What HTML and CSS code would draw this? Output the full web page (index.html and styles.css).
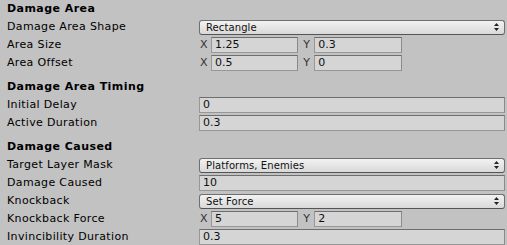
FILE: index.html
```html
<!DOCTYPE html>
<html lang="en">
<head>
    <meta charset="UTF-8">
    <title>Inspector - Damage Area</title>
    <link rel="stylesheet" href="styles.css">
</head>
<body>
    <div class="inspector">
        <div class="header first">Damage Area</div>
        <div class="row">
            <div class="label">Damage Area Shape</div>
            <div class="popup"><span>Rectangle</span><svg class="arrows" width="5" height="8" viewBox="0 0 5 8"><path d="M2.5 0 L5 3 L0 3 Z M0 5 L5 5 L2.5 8 Z" fill="#222"/></svg></div>
        </div>
        <div class="row">
            <div class="label">Area Size</div>
            <div class="vector">
                <div class="axis"><span class="axis-label">X</span><div class="field">1.25</div></div>
                <div class="axis"><span class="axis-label">Y</span><div class="field">0.3</div></div>
            </div>
        </div>
        <div class="row">
            <div class="label">Area Offset</div>
            <div class="vector">
                <div class="axis"><span class="axis-label">X</span><div class="field">0.5</div></div>
                <div class="axis"><span class="axis-label">Y</span><div class="field">0</div></div>
            </div>
        </div>

        <div class="header">Damage Area Timing</div>
        <div class="row">
            <div class="label">Initial Delay</div>
            <div class="field">0</div>
        </div>
        <div class="row">
            <div class="label">Active Duration</div>
            <div class="field">0.3</div>
        </div>

        <div class="header">Damage Caused</div>
        <div class="row">
            <div class="label">Target Layer Mask</div>
            <div class="popup"><span>Platforms, Enemies</span><svg class="arrows" width="5" height="8" viewBox="0 0 5 8"><path d="M2.5 0 L5 3 L0 3 Z M0 5 L5 5 L2.5 8 Z" fill="#222"/></svg></div>
        </div>
        <div class="row">
            <div class="label">Damage Caused</div>
            <div class="field">10</div>
        </div>
        <div class="row">
            <div class="label">Knockback</div>
            <div class="popup"><span>Set Force</span><svg class="arrows" width="5" height="8" viewBox="0 0 5 8"><path d="M2.5 0 L5 3 L0 3 Z M0 5 L5 5 L2.5 8 Z" fill="#222"/></svg></div>
        </div>
        <div class="row">
            <div class="label">Knockback Force</div>
            <div class="vector">
                <div class="axis"><span class="axis-label">X</span><div class="field">5</div></div>
                <div class="axis"><span class="axis-label">Y</span><div class="field">2</div></div>
            </div>
        </div>
        <div class="row">
            <div class="label">Invincibility Duration</div>
            <div class="field">0.3</div>
        </div>
    </div>
</body>
</html>
```

FILE: styles.css
```css
body {
    margin: 0;
    padding: 0;
    background-color: #c2c2c2;
    font-family: "DejaVu Sans", sans-serif;
    font-size: 11px;
    color: #000;
    overflow: hidden;
}
.inspector {
    padding: 0 2px 0 7px;
}
.header {
    height: 18px;
    line-height: 18px;
    margin-top: 6px;
    font-weight: bold;
    letter-spacing: 0.45px;
}
.header.first {
    margin-top: 0;
}
.row {
    display: grid;
    grid-template-columns: 192px 1fr;
    height: 18px;
    align-items: center;
}
.label {
    line-height: 18px;
    letter-spacing: 0.35px;
    white-space: nowrap;
}
.field {
    box-sizing: border-box;
    height: 16px;
    line-height: 14px;
    padding-left: 3px;
    background-color: #d5d5d5;
    border: 1px solid #979797;
    border-top-color: #6e6e6e;
    border-right-color: #8a8a8a;
    color: #111;
    white-space: nowrap;
    overflow: hidden;
}
.popup {
    box-sizing: border-box;
    height: 15px;
    display: flex;
    align-items: center;
    justify-content: space-between;
    padding: 0 5px 0 6px;
    font-size: 10px;
    letter-spacing: 0.1px;
    background: linear-gradient(#f2f2f2, #d9d9d9);
    border: 1px solid #6f6f6f;
    border-bottom-color: #555;
    border-radius: 3px;
    color: #111;
}
.arrows {
    display: block;
}
.vector {
    display: grid;
    grid-template-columns: repeat(3, 1fr);
    column-gap: 4px;
}
.axis {
    display: grid;
    grid-template-columns: 12px 1fr;
    align-items: center;
}
.axis-label {
    padding-left: 1px;
    color: #333;
    line-height: 18px;
}
```
